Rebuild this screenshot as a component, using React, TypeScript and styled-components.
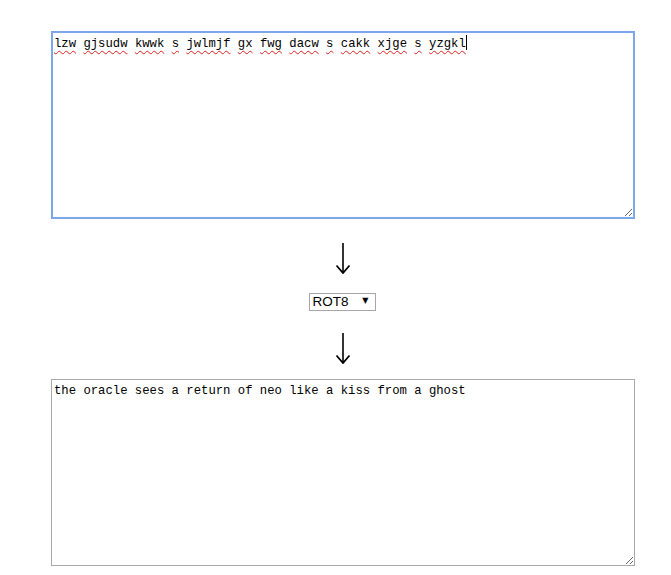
import styled, { createGlobalStyle } from "styled-components";

const GlobalStyle = createGlobalStyle`
    html, body {
        margin: 0;
        padding: 0;
        background: #fff;
    }
`;

const cipherWords = "lzw gjsudw kwwk s jwlmjf gx fwg dacw s cakk xjge s yzgkl".split(" ");
const plainText = "the oracle sees a return of neo like a kiss from a ghost";

function Arrow() {
    return (
        <ArrowWrap>
            <svg width="16" height="31" viewBox="0 0 16 31">
                <path d="M8 0 V29.5" stroke="#000" strokeWidth="1.6" fill="none" />
                <path d="M1.5 22.5 L8 30 L14.5 22.5" stroke="#000" strokeWidth="1.8" fill="none" />
            </svg>
        </ArrowWrap>
    );
}

function App() {
    return (
        <Page>
            <GlobalStyle />
            <Column>
                <InputBox>
                    {cipherWords.map((w, i) => (
                        <span key={i}>
                            <Misspelled>{w}</Misspelled>
                            {i < cipherWords.length - 1 ? " " : ""}
                        </span>
                    ))}
                    <Caret />
                </InputBox>
                <Arrow />
                <SelectWrap>
                    <Select defaultValue="ROT8">
                        <option value="ROT8">ROT8</option>
                    </Select>
                    <SelectArrow>▼</SelectArrow>
                </SelectWrap>
                <Arrow />
                <Output readOnly value={plainText} spellCheck={false} />
            </Column>
        </Page>
    );
}

const Page = styled.div`
    padding: 31px 0 0 51px;
`;

const Column = styled.div`
    width: 584px;
    display: flex;
    flex-direction: column;
    align-items: center;
`;

const InputBox = styled.div`
    box-sizing: border-box;
    width: 584px;
    height: 188px;
    border: 2px solid #7ea6ec;
    padding: 2px 1px;
    font-family: "Liberation Mono", monospace;
    font-size: 12.25px;
    line-height: 16px;
    color: #000;
    white-space: pre-wrap;
    overflow: auto;
    resize: both;
`;

const Misspelled = styled.span`
    text-decoration: underline wavy #e02020;
    text-decoration-thickness: 1px;
    text-underline-offset: 3px;
    text-decoration-skip-ink: none;
`;

const Caret = styled.span`
    display: inline-block;
    width: 1px;
    height: 15px;
    background: #000;
    vertical-align: -3px;
`;

const ArrowWrap = styled.div`
    margin-top: 24px;
    height: 31px;
    display: flex;
    justify-content: center;
    & + * {
        margin-top: 18px;
    }
`;

const SelectWrap = styled.div`
    position: relative;
    width: 67px;
    height: 18px;
    margin-left: -2px;
    & + div {
        margin-top: 23px;
    }
`;

const Select = styled.select`
    appearance: none;
    box-sizing: border-box;
    width: 67px;
    height: 18px;
    margin: 0;
    padding: 0 0 0 3px;
    border: 1px solid #a6a6a6;
    border-radius: 0;
    background: #fff;
    font-family: "Liberation Sans", Arial, sans-serif;
    font-size: 13.5px;
    color: #000;
    line-height: 16px;
`;

const SelectArrow = styled.span`
    position: absolute;
    right: 7px;
    top: 4px;
    font-family: "DejaVu Sans", sans-serif;
    font-size: 8px;
    line-height: 10px;
    color: #000;
    pointer-events: none;
`;

const Output = styled.textarea`
    box-sizing: border-box;
    width: 584px;
    height: 187px;
    margin: 15px 0 0 0;
    border: 1px solid #a9a9a9;
    padding: 3px 2px;
    font-family: "Liberation Mono", monospace;
    font-size: 12.25px;
    line-height: 16px;
    color: #000;
    outline: none;
`;

export default App;
